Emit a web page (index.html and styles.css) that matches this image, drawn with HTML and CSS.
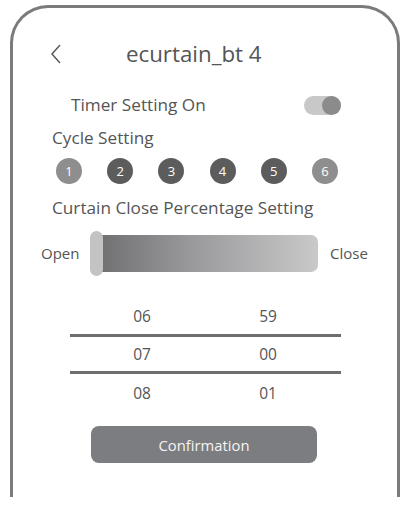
FILE: index.html
```html
<!DOCTYPE html>
<html>
<head>
<meta charset="utf-8">
<link rel="stylesheet" href="styles.css">
</head>
<body>
<div class="screen">
  <div class="header">
    <svg class="back" width="12" height="22" viewBox="0 0 12 22"><path d="M10 2 L2 11 L10 20" fill="none" stroke="#555" stroke-width="1.4"/></svg>
    <div class="title">ecurtain_bt 4</div>
  </div>
  <div class="timer-row">
    <span class="label">Timer Setting On</span>
    <span class="toggle"><span class="knob"></span></span>
  </div>
  <div class="section-title cycle-title">Cycle Setting</div>
  <div class="days">
    <span class="day light">1</span>
    <span class="day dark">2</span>
    <span class="day dark">3</span>
    <span class="day dark">4</span>
    <span class="day dark">5</span>
    <span class="day light">6</span>
  </div>
  <div class="section-title curtain-title">Curtain Close Percentage Setting</div>
  <div class="slider-row">
    <span class="end-label">Open</span>
    <div class="track"><span class="handle"></span></div>
    <span class="end-label close">Close</span>
  </div>
  <div class="picker">
    <div class="prow"><span>06</span><span>59</span></div>
    <div class="prow selected"><span>07</span><span>00</span></div>
    <div class="prow"><span>08</span><span>01</span></div>
  </div>
  <div class="btn-row"><button class="confirm">Confirmation</button></div>
</div>
</body>
</html>
```
FILE: styles.css
```css
html, body { margin: 0; padding: 0; background: #fff; }
body { font-family: "Open Sans", "Noto Sans", sans-serif; color: #555; }
.screen {
  margin: 5px 0 0 10px;
  width: 390px;
  height: 492px;
  box-sizing: border-box;
  border: 3px solid #7b7b7b;
  border-bottom: 0;
  border-radius: 38px 38px 0 0;
}
.header {
  margin-top: 31px;
  height: 30px;
  display: flex;
  align-items: center;
  padding-left: 37px;
}
.back { display: block; }
.title { margin-left: 64px; font-size: 22.3px; line-height: 30px; color: #555; }
.timer-row {
  margin-top: 23px;
  height: 26px;
  display: flex;
  align-items: center;
  padding-left: 58px;
}
.label { font-size: 17.2px; line-height: 26px; width: 233px; }
.toggle {
  position: relative;
  display: block;
  width: 37px;
  height: 19px;
  border-radius: 10px;
  background: #c8c8c8;
}
.knob {
  position: absolute;
  right: 0;
  top: 0;
  width: 19px;
  height: 19px;
  border-radius: 50%;
  background: #8b8b8b;
}
.section-title { font-size: 17.2px; line-height: 24px; padding-left: 39px; }
.cycle-title { margin-top: 8px; }
.days {
  margin-top: 8px;
  display: flex;
  gap: 25.2px;
  padding-left: 43px;
}
.day {
  width: 26px;
  height: 26px;
  border-radius: 50%;
  color: #fff;
  font-size: 13px;
  display: flex;
  align-items: center;
  justify-content: center;
}
.day.light { background: #8e8e8e; }
.day.dark { background: #5c5c5c; }
.curtain-title { margin-top: 12px; }
.slider-row {
  margin-top: 11px;
  height: 44px;
  display: flex;
  align-items: center;
  padding-left: 28px;
}
.end-label { font-size: 15px; width: 49px; }
.end-label.close { margin-left: 12px; }
.track {
  position: relative;
  width: 228px;
  height: 37px;
  border-radius: 7px;
  background: linear-gradient(to right, #6c6c6e, #9a9a9c 45%, #c9c9ca);
}
.handle {
  position: absolute;
  left: 0;
  top: -4px;
  width: 13px;
  height: 45px;
  border-radius: 7px;
  background: #c3c3c3;
}
.picker {
  margin-top: 22px;
  margin-left: 57px;
  width: 271px;
}
.prow {
  display: grid;
  grid-template-columns: 144px 108px;
  height: 37px;
  align-items: center;
  font-size: 15.5px;
  color: #555;
}
.prow span { text-align: center; }
.prow.selected {
  border-top: 3px solid #6e6e6e;
  border-bottom: 3px solid #6e6e6e;
  height: 34px;
  box-sizing: content-box;
}
.btn-row { margin-top: 15px; padding-left: 78px; }
.confirm {
  width: 226px;
  height: 37px;
  border: 0;
  border-radius: 8px;
  background: #7c7d80;
  color: #f4f4f4;
  font-family: "Open Sans", "Noto Sans", sans-serif;
  font-size: 14.8px;
  padding: 0;
}
```
